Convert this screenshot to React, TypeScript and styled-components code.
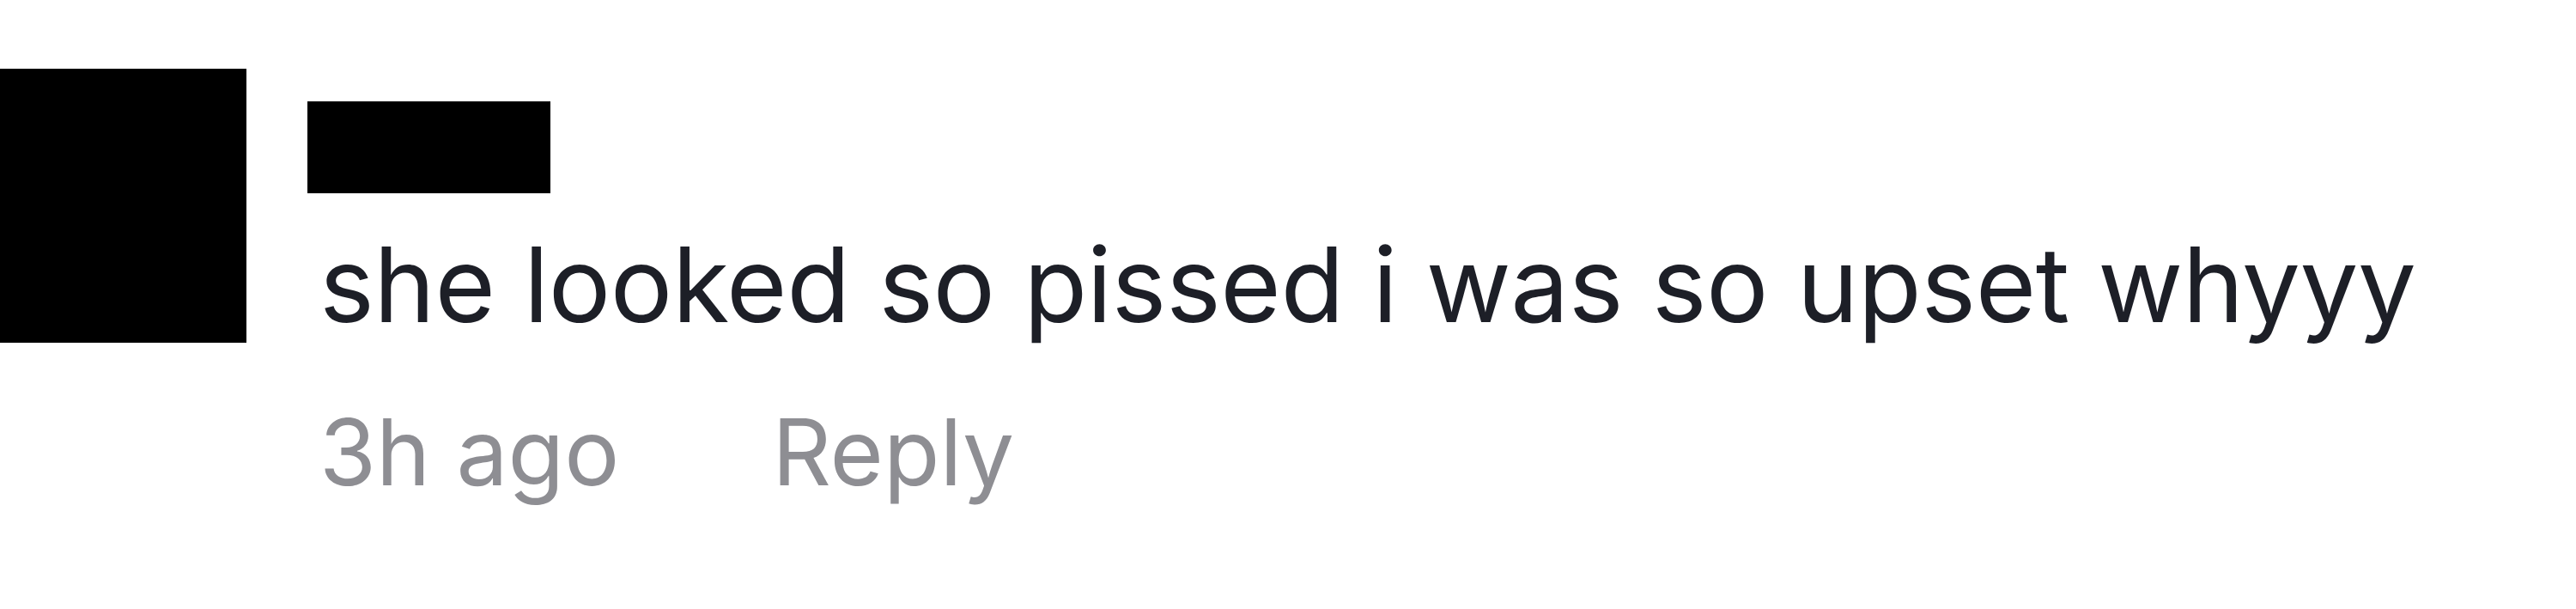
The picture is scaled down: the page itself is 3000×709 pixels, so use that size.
import styled, { createGlobalStyle } from 'styled-components'

const GlobalStyle = createGlobalStyle`
    html, body {
        margin: 0;
        padding: 0;
        background: #ffffff;
    }
    body {
        font-family: Inter, 'Noto Sans', 'Liberation Sans', sans-serif;
    }
`

const CommentRow = styled.div`
    display: flex;
    align-items: flex-start;
    gap: 71px;
    padding-top: 80px;
    width: 3000px;
    height: 709px;
    box-sizing: border-box;
`

const Avatar = styled.div`
    width: 287px;
    height: 319px;
    flex-shrink: 0;
    background: #000;
`

const Body = styled.div`
    display: flex;
    flex-direction: column;
    padding-top: 38px;
`

const NameRedacted = styled.div`
    width: 283px;
    height: 107px;
    background: #000;
`

const CommentText = styled.p`
    margin: 33px 0 0 14px;
    font-size: 121px;
    line-height: 146px;
    letter-spacing: -0.5px;
    color: #1d1f27;
    white-space: nowrap;
`

const MetaRow = styled.div`
    display: flex;
    gap: 178px;
    margin: 57px 0 0 14px;
    font-size: 107px;
    line-height: 130px;
    color: #8e8e93;
`

const MetaItem = styled.span<{ $clickable?: boolean }>`
    cursor: ${(p) => (p.$clickable ? 'pointer' : 'default')};
`

const comment = {
    text: 'she looked so pissed i was so upset whyyy',
    time: '3h ago',
}

const App = () => {
    return (
        <>
            <GlobalStyle />
            <CommentRow>
                <Avatar />
                <Body>
                    <NameRedacted />
                    <CommentText>{comment.text}</CommentText>
                    <MetaRow>
                        <MetaItem>{comment.time}</MetaItem>
                        <MetaItem $clickable>Reply</MetaItem>
                    </MetaRow>
                </Body>
            </CommentRow>
        </>
    )
}

export default App
